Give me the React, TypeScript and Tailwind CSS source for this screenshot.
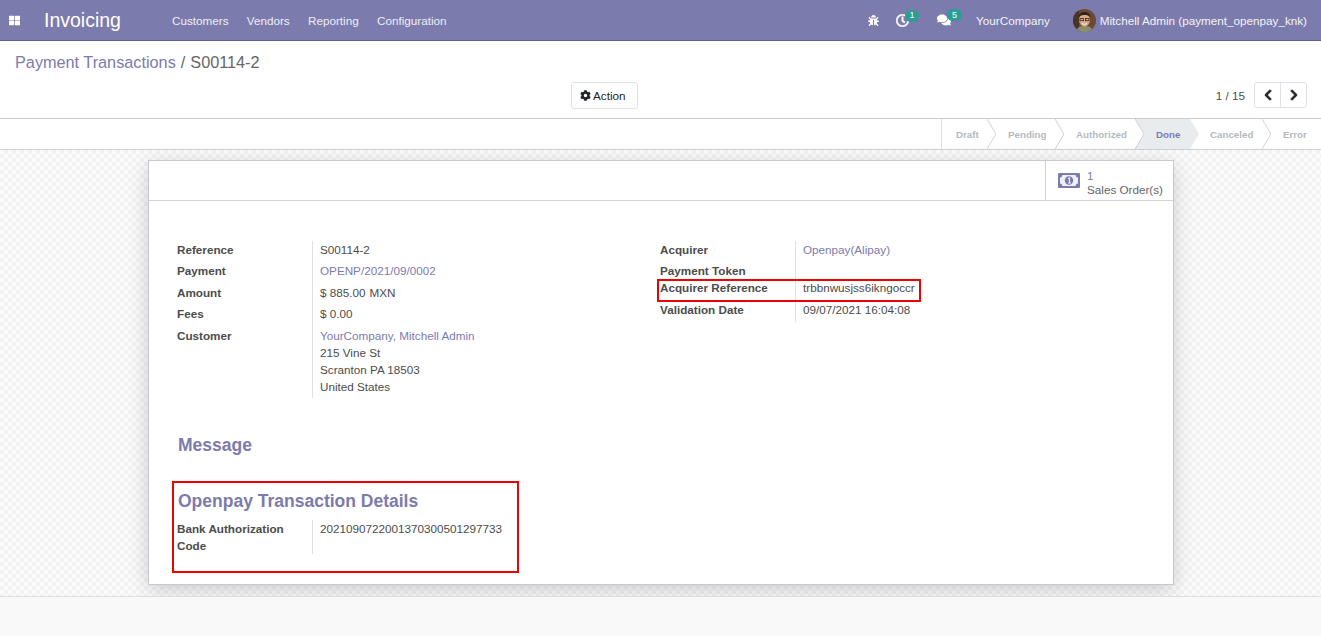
import { FaThLarge, FaBug, FaRegClock, FaComments, FaCog, FaChevronLeft, FaChevronRight } from "react-icons/fa";

function Avatar() {
  return (
    <svg width="23" height="23" viewBox="0 0 23 23" className="shrink-0 rounded-full">
      <rect width="23" height="23" fill="#6b4a33" />
      <rect x="0" y="0" width="6" height="23" fill="#4a3426" />
      <path d="M3 23c1-5 4-6 8.500-6s7.500 1 8.500 6z" fill="#8a8d6e" />
      <ellipse cx="11.500" cy="11" rx="5.500" ry="6.500" fill="#d9a884" />
      <path d="M5.500 9c0-4 2.500-6 6-6s6 2 6 6c-1-2-2-3-6-3s-5 1-6 3z" fill="#2c2320" />
      <rect x="7" y="9.500" width="3.500" height="2.200" fill="none" stroke="#33271f" strokeWidth="0.800" />
      <rect x="12.500" y="9.500" width="3.500" height="2.200" fill="none" stroke="#33271f" strokeWidth="0.800" />
      <path d="M9 14.500c1.500 1 3.500 1 5 0" stroke="#fff" strokeWidth="0.900" fill="none" />
    </svg>
  );
}

function MoneyIcon() {
  return (
    <svg width="22" height="15" viewBox="0 0 22 15" className="shrink-0">
      <rect width="22" height="15" rx="1" fill="#7c7bad" />
      <path d="M4.500 2H17.500C17.800 3.500 18.500 4.200 20 4.500V10.500C18.500 10.800 17.800 11.500 17.500 13H4.500C4.200 11.500 3.500 10.800 2 10.500V4.500C3.500 4.200 4.200 3.500 4.500 2Z" fill="#eeeef6" />
      <circle cx="11" cy="7.500" r="4.200" fill="#7c7bad" />
      <path d="M10 5.800L11.500 5V10M10 10H13" stroke="#eeeef6" strokeWidth="1.200" fill="none" />
    </svg>
  );
}

function Badge({ n, className }: { n: string; className: string }) {
  return (
    <span className={"absolute flex items-center justify-center rounded-full bg-[#2a9d94] text-white text-[9px] leading-none " + className}>
      {n}
    </span>
  );
}

function Stage({ label, className, active, last }: { label: string; className: string; active?: boolean; last?: boolean }) {
  return (
    <div
      className={
        "relative flex h-full items-center text-[9.750px] font-bold " +
        (active ? "bg-[#e9ecef] text-[#7c7bad] " : "text-[#b4bac0] ") +
        className
      }
    >
      {label}
      {!last && (
        <svg width="9" height="30" viewBox="0 0 9 30" className="absolute left-full top-0 z-10">
          <path d="M0 0L9 15L0 30Z" fill={active ? "#e9ecef" : "#ffffff"} />
          {!active && <path d="M0 0L9 15L0 30" fill="none" stroke="#d0d3d6" strokeWidth="1" />}
        </svg>
      )}
    </div>
  );
}

function Row({ label, children, h }: { label: React.ReactNode; children?: React.ReactNode; h: string }) {
  return (
    <div className={"flex " + h}>
      <div className="w-[136px] shrink-0 border-r border-[#dee2e6] font-bold text-[#4c4c4c]">{label}</div>
      <div className="pl-[7px] whitespace-nowrap">{children}</div>
    </div>
  );
}

export default function App() {
  const link = "text-[#7c7bad]";
  return (
    <div className="flex h-screen flex-col overflow-hidden bg-white font-['Liberation_Sans',Arial,sans-serif] text-[11.700px] leading-[17px] text-[#4c4c4c]">
      <header className="flex h-[41px] shrink-0 items-center border-b border-[#5f5e97] bg-[#7c7bad] text-[#f3f3f7]">
        <FaThLarge className="ml-[9px] text-[11px] text-white" />
        <span className="ml-[24px] text-[19.500px] text-white">Invoicing</span>
        <nav className="ml-[51px] flex gap-[18.300px] text-[#eeeef5]">
          <span>Customers</span>
          <span>Vendors</span>
          <span>Reporting</span>
          <span>Configuration</span>
        </nav>
        <div className="ml-auto mr-[14px] flex items-center">
          <FaBug className="text-[11px] text-white" />
          <span className="relative ml-[17px] text-white">
            <FaRegClock className="text-[13px] stroke-[24px]" />
            <Badge n="1" className="-top-[4px] left-[9px] h-[12px] w-[14px]" />
          </span>
          <span className="relative ml-[28px] text-white">
            <FaComments className="text-[14px]" />
            <Badge n="5" className="-top-[4px] left-[10px] h-[12px] w-[15px]" />
          </span>
          <span className="ml-[25px]">YourCompany</span>
          <span className="ml-[23px]"><Avatar /></span>
          <span className="ml-[4px]">Mitchell Admin (payment_openpay_knk)</span>
        </div>
      </header>

      <div className="h-[78px] shrink-0 border-b border-[#cccccc] pl-[15px] pr-[14px] pt-[11px]">
        <div className="text-[16.250px] leading-[20px]">
          <span className={link}>Payment Transactions</span>
          <span className="ml-[5px] text-[#666666]">/</span>
          <span className="ml-[5px] text-[#666666]">S00114-2</span>
        </div>
        <div className="relative mt-[10px] flex h-[27px] items-start justify-end">
          <button className="absolute left-[556px] top-0 flex h-[27px] w-[67px] items-center gap-[2px] rounded-[3px] border border-[#dee2e6] bg-white pl-[8px] text-[#212529]">
            <FaCog className="text-[11px]" /> Action
          </button>
          <span className="mr-[9px] self-center text-[#4c4c4c]">1 / 15</span>
          <div className="flex h-[26px] w-[53px] rounded-[3px] border border-[#dee2e6] text-[#212529]">
            <span className="flex flex-1 items-center justify-center border-r border-[#dee2e6]"><FaChevronLeft className="text-[12px] stroke-[40px]" /></span>
            <span className="flex flex-1 items-center justify-center"><FaChevronRight className="text-[12px] stroke-[40px]" /></span>
          </div>
        </div>
      </div>

      <div className="flex h-[31px] shrink-0 justify-end border-b border-[#cfcfda] bg-white">
        <Stage label="Draft" className="w-[46px] border-l border-[#dee2e6] pl-[14px]" />
        <Stage label="Pending" className="w-[68px] pl-[21px]" />
        <Stage label="Authorized" className="w-[80px] pl-[21px]" />
        <Stage label="Done" active className="w-[55px] pl-[21px]" />
        <Stage label="Canceled" className="w-[72px] pl-[20px]" />
        <Stage label="Error" last className="w-[59px] pl-[21px]" />
      </div>

      <main className="h-[446px] shrink-0 bg-[repeating-conic-gradient(#f2f2f2_0_25%,#fbfbfb_0_50%)] bg-[length:8px_8px] pt-[10px]">
        <section className="ml-[148px] h-[425px] w-[1026px] border border-[#c8c8d4] bg-white shadow-[0_5px_20px_-1px_rgba(0,0,0,0.2)]">
          <div className="flex h-[40px] justify-end border-b border-[#ced4da]">
            <div className="flex w-[128px] items-center border-l border-[#ced4da] pl-[12px]">
              <MoneyIcon />
              <div className="ml-[7px] pt-[4px] leading-[14px]">
                <div className={link}>1</div>
                <div className="text-[#666666]">Sales Order(s)</div>
              </div>
            </div>
          </div>

          <div className="px-[28px] pt-[40px]">
            <div className="flex">
              <div className="w-[483px]">
                <Row label="Reference" h="h-[21px]">S00114-2</Row>
                <Row label="Payment" h="h-[22px]"><span className={link}>OPENP/2021/09/0002</span></Row>
                <Row label="Amount" h="h-[21px]">$ 885.00<span className="ml-[4px]">MXN</span></Row>
                <Row label="Fees" h="h-[22px]">$ 0.00</Row>
                <Row label="Customer" h="h-[71px]">
                  <div className={link}>YourCompany, Mitchell Admin</div>
                  <div>215 Vine St</div>
                  <div>Scranton PA 18503</div>
                  <div>United States</div>
                </Row>
              </div>
              <div className="w-[400px]">
                <Row label="Acquirer" h="h-[21px]"><span className={link}>Openpay(Alipay)</span></Row>
                <Row label="Payment Token" h="h-[17px]" />
                <div className="relative">
                  <Row label="Acquirer Reference" h="h-[22px]">trbbnwusjss6ikngoccr</Row>
                  <div className="absolute -left-[3px] top-0 h-[23px] w-[264px] border-2 border-[#f00000]" />
                </div>
                <Row label="Validation Date" h="h-[21px]">09/07/2021 16:04:08</Row>
              </div>
            </div>

            <h2 className="ml-[1px] mt-[37px] text-[17.500px] font-bold leading-[20px] text-[#7c7bad]">Message</h2>

            <div className="-ml-[5px] mt-[26px] h-[92px] w-[347px] border-2 border-[#f00000] pl-[3px] pt-[8px]">
              <h2 className="ml-[1px] text-[17.500px] font-bold leading-[20px] text-[#7c7bad]">Openpay Transaction Details</h2>
              <div className="mt-[9px]">
                <Row label={<>Bank Authorization<br />Code</>} h="h-[34px]">2021090722001370300501297733</Row>
              </div>
            </div>
          </div>
        </section>
      </main>

      <footer className="flex-1 border-t border-[#dedede] bg-[#f9f9f9]" />
    </div>
  );
}
